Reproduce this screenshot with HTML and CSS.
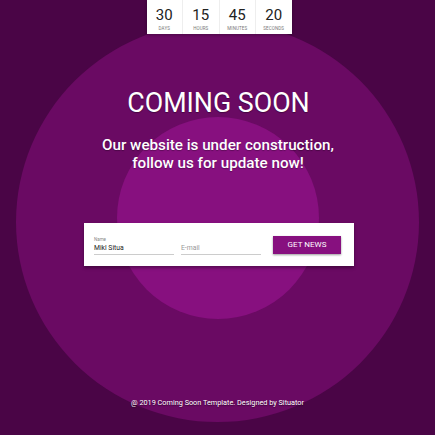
FILE: index.html
```html
<!DOCTYPE html>
<html>
<head>
<meta charset="utf-8">
<link rel="stylesheet" href="styles.css">
</head>
<body>
<div class="page">
  <div class="circle-outer"></div>
  <div class="circle-inner"></div>
  <div class="content">
    <div class="countdown">
      <div class="cell"><span class="num">30</span><span class="lbl">DAYS</span></div>
      <div class="cell"><span class="num">15</span><span class="lbl">HOURS</span></div>
      <div class="cell"><span class="num">45</span><span class="lbl">MINUTES</span></div>
      <div class="cell"><span class="num">20</span><span class="lbl">SECONDS</span></div>
    </div>
    <h1 class="title">COMING SOON</h1>
    <p class="subtitle">Our website is under construction,<br>follow us for update now!</p>
    <div class="card">
      <div class="field">
        <span class="flabel">Name</span>
        <span class="fvalue">Mikl Situa</span>
      </div>
      <div class="field">
        <span class="flabel"></span>
        <span class="fvalue placeholder">E-mail</span>
      </div>
      <div class="btn">GET NEWS</div>
    </div>
    <p class="footer">@ 2019 Coming Soon Template. Designed by Situator</p>
  </div>
</div>
</body>
</html>
```
FILE: styles.css
```css
html, body {
  margin: 0;
  padding: 0;
}
body {
  font-family: Roboto, "Liberation Sans", sans-serif;
  background: #4a0546;
}
.page {
  position: relative;
  width: 435px;
  height: 435px;
  overflow: hidden;
  background: #4a0546;
}
.circle-outer {
  position: absolute;
  left: 16px;
  top: 22px;
  width: 403px;
  height: 400px;
  border-radius: 50%;
  background: #6a0a63;
}
.circle-inner {
  position: absolute;
  left: 117px;
  top: 117px;
  width: 202px;
  height: 202px;
  border-radius: 50%;
  background: #87107f;
}
.content {
  position: relative;
  display: flex;
  flex-direction: column;
  align-items: center;
  height: 435px;
}
.countdown {
  display: flex;
  background: #fff;
  margin-left: 3px;
  height: 34px;
  box-shadow: 0 1px 3px rgba(0,0,0,0.3);
}
.cell {
  display: flex;
  flex-direction: column;
  align-items: center;
  width: 35.5px;
  border-left: 1px solid #eee;
}
.cell:first-child { border-left: none; }
.num {
  font-size: 15px;
  color: #222;
  line-height: 16px;
  margin-top: 7px;
}
.lbl {
  font-size: 4.5px;
  color: #777;
  margin-top: 3px;
  letter-spacing: 0.1px;
}
.title {
  margin: 53px 0 0 2px;
  font-size: 26.8px;
  font-weight: 400;
  color: #fff;
  line-height: 32px;
  text-shadow: 0 1px 1px rgba(0,0,0,0.35);
}
.subtitle {
  margin: 18px 0 0 1px;
  font-size: 15.2px;
  font-weight: 500;
  color: #fff;
  text-align: center;
  line-height: 17.5px;
  text-shadow: 0 1px 1px rgba(0,0,0,0.3);
}
.card {
  margin-top: 51px;
  margin-left: 3px;
  width: 270px;
  height: 43px;
  background: #fff;
  box-sizing: border-box;
  padding: 0 12px 0 10px;
  display: flex;
  align-items: center;
  gap: 7px;
  box-shadow: 0 2px 3px rgba(0,0,0,0.35);
}
.field {
  width: 80px;
  display: flex;
  flex-direction: column;
  border-bottom: 1px solid #ccc;
  padding-bottom: 2px;
  margin-top: 2px;
}
.flabel {
  font-size: 4.5px;
  color: #888;
  height: 6px;
}
.fvalue {
  font-size: 6.8px;
  color: #222;
  line-height: 8px;
  margin-top: 1px;
}
.placeholder { color: #999; }
.btn {
  margin-left: 5px;
  width: 68px;
  height: 18px;
  background: #87107f;
  color: #fff;
  font-size: 8px;
  display: flex;
  align-items: center;
  justify-content: center;
  box-shadow: 0 1px 2px rgba(0,0,0,0.4);
}
.footer {
  margin: auto 0 28px 0;
  font-size: 7.3px;
  color: #fff;
  text-shadow: 0 1px 1px rgba(0,0,0,0.5);
}
```
